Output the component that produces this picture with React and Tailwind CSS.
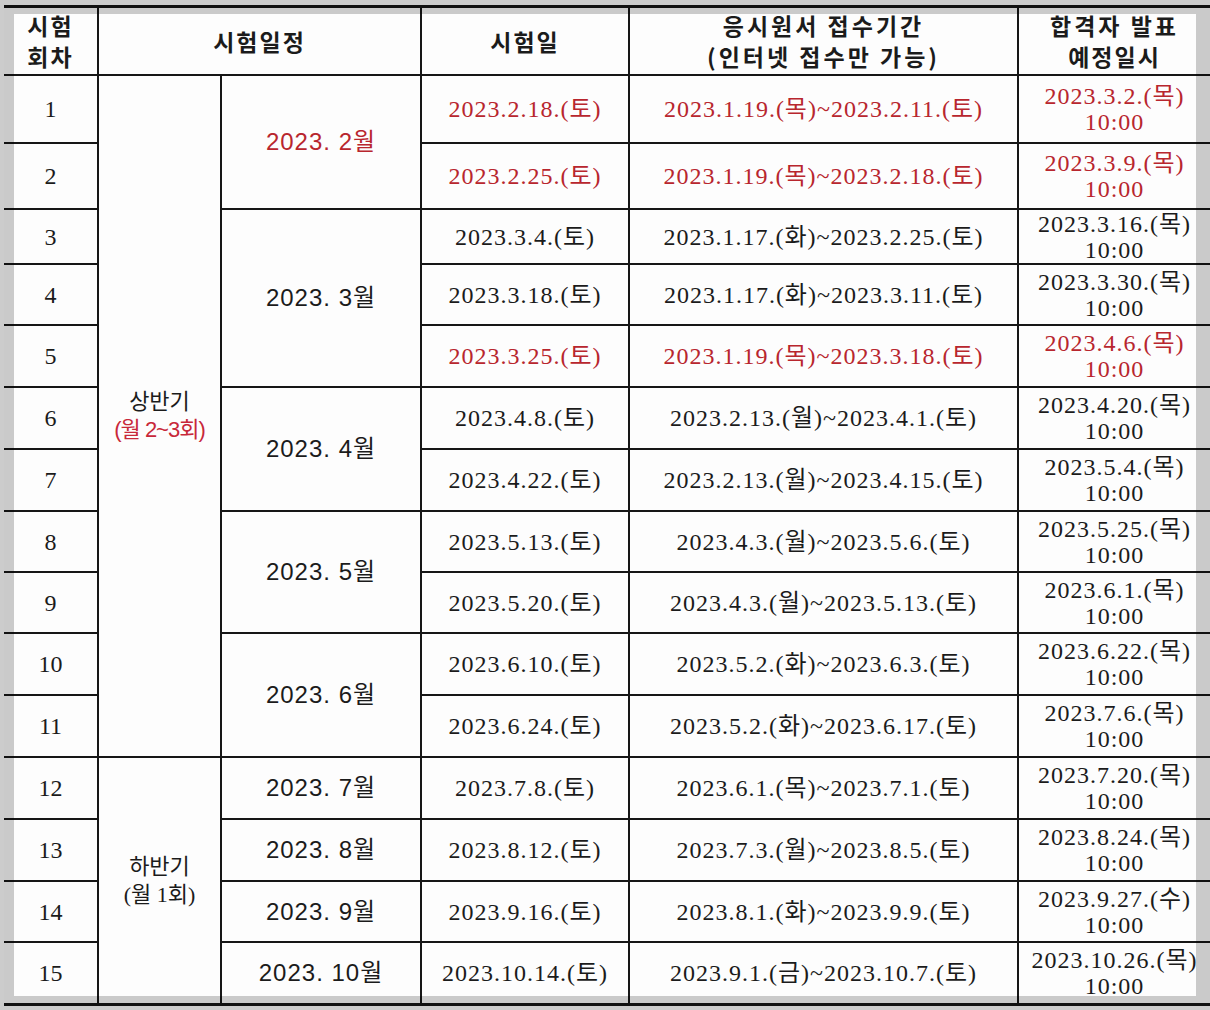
const rows = [
  { no: 1, day: "2023.2.18.(토)", period: "2023.1.19.(목)~2023.2.11.(토)", result: "2023.3.2.(목)", red: true },
  { no: 2, day: "2023.2.25.(토)", period: "2023.1.19.(목)~2023.2.18.(토)", result: "2023.3.9.(목)", red: true },
  { no: 3, day: "2023.3.4.(토)", period: "2023.1.17.(화)~2023.2.25.(토)", result: "2023.3.16.(목)" },
  { no: 4, day: "2023.3.18.(토)", period: "2023.1.17.(화)~2023.3.11.(토)", result: "2023.3.30.(목)" },
  { no: 5, day: "2023.3.25.(토)", period: "2023.1.19.(목)~2023.3.18.(토)", result: "2023.4.6.(목)", red: true },
  { no: 6, day: "2023.4.8.(토)", period: "2023.2.13.(월)~2023.4.1.(토)", result: "2023.4.20.(목)" },
  { no: 7, day: "2023.4.22.(토)", period: "2023.2.13.(월)~2023.4.15.(토)", result: "2023.5.4.(목)" },
  { no: 8, day: "2023.5.13.(토)", period: "2023.4.3.(월)~2023.5.6.(토)", result: "2023.5.25.(목)" },
  { no: 9, day: "2023.5.20.(토)", period: "2023.4.3.(월)~2023.5.13.(토)", result: "2023.6.1.(목)" },
  { no: 10, day: "2023.6.10.(토)", period: "2023.5.2.(화)~2023.6.3.(토)", result: "2023.6.22.(목)" },
  { no: 11, day: "2023.6.24.(토)", period: "2023.5.2.(화)~2023.6.17.(토)", result: "2023.7.6.(목)" },
  { no: 12, day: "2023.7.8.(토)", period: "2023.6.1.(목)~2023.7.1.(토)", result: "2023.7.20.(목)" },
  { no: 13, day: "2023.8.12.(토)", period: "2023.7.3.(월)~2023.8.5.(토)", result: "2023.8.24.(목)" },
  { no: 14, day: "2023.9.16.(토)", period: "2023.8.1.(화)~2023.9.9.(토)", result: "2023.9.27.(수)" },
  { no: 15, day: "2023.10.14.(토)", period: "2023.9.1.(금)~2023.10.7.(토)", result: "2023.10.26.(목)" },
];

// 월 칸 병합 정보 (시작 회차 기준)
const months = {
  1: { label: "2023. 2월", span: "row-span-2", red: true },
  3: { label: "2023. 3월", span: "row-span-3" },
  6: { label: "2023. 4월", span: "row-span-2" },
  8: { label: "2023. 5월", span: "row-span-2" },
  10: { label: "2023. 6월", span: "row-span-2" },
  12: { label: "2023. 7월", span: "row-span-1" },
  13: { label: "2023. 8월", span: "row-span-1" },
  14: { label: "2023. 9월", span: "row-span-1" },
  15: { label: "2023. 10월", span: "row-span-1" },
};

const serif = "font-['Liberation_Serif','Noto_Sans_CJK_KR',serif]";
const sans = "font-['Liberation_Sans','Noto_Sans_CJK_KR',sans-serif]";
const head = "font-['Noto_Sans_CJK_KR',sans-serif] font-bold text-[23px] leading-[31px] tracking-[2px] text-[#1b1b1b] bg-[#f7e9ea]";
const cell = "flex items-center justify-center text-center bg-[#fdfdfd]";

const App = () => {
  return (
    <div className="relative w-[1210px] h-[1010px] overflow-hidden bg-white">
      <div className="pt-[5px] pl-[4px]">
        <div className="grid grid-cols-[93px_121px_198px_206px_387px_191px] grid-rows-[66px_66px_64px_53px_59px_60px_60px_60px_59px_59px_60px_60px_60px_60px_59px_60px] gap-[2px] bg-[#161616] py-[3px]">
          {/* 헤더 */}
          <div className={`${cell} ${head} flex-col`}>
            <span>시험</span>
            <span>회차</span>
          </div>
          <div className={`${cell} ${head} col-span-2`}>시험일정</div>
          <div className={`${cell} ${head}`}>시험일</div>
          <div className={`${cell} ${head} flex-col`}>
            <span className="tracking-[3px]">응시원서 접수기간</span>
            <span className="tracking-[3px]">(인터넷 접수만 가능)</span>
          </div>
          <div className={`${cell} ${head} flex-col`}>
            <span className="tracking-[3px]">합격자 발표</span>
            <span>예정일시</span>
          </div>

          {rows.map((r) => {
            const color = r.red ? "text-[#b8262e]" : "text-[#1b1b1b]";
            const m = months[r.no];
            return [
              <div key={`n${r.no}`} className={`${cell} ${serif} text-[24px] text-[#1b1b1b]`}>
                {r.no}
              </div>,
              r.no === 1 && (
                <div key="h1" className={`${cell} row-span-11 flex-col ${sans} text-[22px] leading-[28px] text-[#1b1b1b]`}>
                  <span>상반기</span>
                  <span className="text-[#c8283a] tracking-[-1px]">(월 2~3회)</span>
                </div>
              ),
              r.no === 12 && (
                <div key="h2" className={`${cell} row-span-4 flex-col ${serif} text-[22px] leading-[28px] text-[#1b1b1b]`}>
                  <span>하반기</span>
                  <span>(월 1회)</span>
                </div>
              ),
              m && (
                <div
                  key={`m${r.no}`}
                  className={`${cell} ${m.span} ${sans} text-[24px] tracking-[1px] ${m.red ? "text-[#b8262e]" : "text-[#1b1b1b]"}`}
                >
                  {m.label}
                </div>
              ),
              <div key={`d${r.no}`} className={`${cell} ${serif} text-[24px] tracking-[1px] ${color}`}>
                {r.day}
              </div>,
              <div key={`p${r.no}`} className={`${cell} ${serif} text-[24px] tracking-[1px] ${color}`}>
                {r.period}
              </div>,
              <div key={`r${r.no}`} className={`${cell} flex-col ${serif} text-[24px] leading-[26px] tracking-[1px] ${color}`}>
                <span>{r.result}</span>
                <span>10:00</span>
              </div>,
            ];
          })}
        </div>
      </div>
      {/* 화면 가장자리 회색 테두리 */}
      <div className="pointer-events-none absolute inset-0 border-[14px] border-black/20" />
    </div>
  );
};

export default App;
